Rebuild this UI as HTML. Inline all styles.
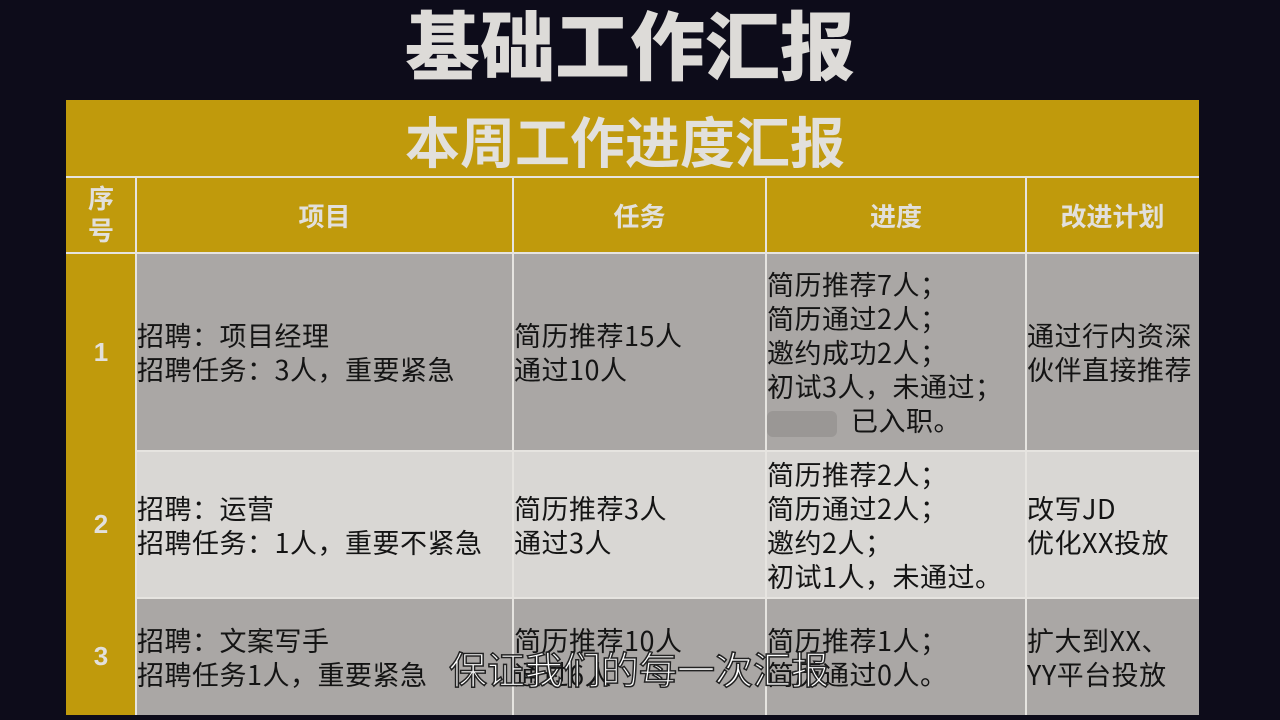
<!DOCTYPE html>
<html><head><meta charset="utf-8"><style>
body{margin:0;width:1280px;height:720px;background:#0d0c1a;overflow:hidden;position:relative;font-family:"Liberation Sans","Noto Sans CJK SC",sans-serif}
.a{position:absolute;box-sizing:border-box}
.t{position:absolute;left:405px;width:460px;top:2px;text-align:left;color:#dddbd8;font-size:75px;font-weight:900;line-height:92px;white-space:nowrap}
.gold{background:#c09a0c}
.g{background:#aaa7a5}
.l{background:#d9d7d4}
.h{color:#e2e0dc;font-weight:bold;font-size:26px;display:flex;align-items:center;justify-content:center;text-align:center}
.c{color:#141414;font-size:27px;letter-spacing:0.5px;line-height:34px;display:flex;flex-direction:column;justify-content:center;padding-left:1px;white-space:nowrap;font-family:"Noto Sans CJK SC",sans-serif}
.vl{position:absolute;width:2px;background:#e6e4e0}
.hl{position:absolute;height:2px;background:#e6e4e0}
.sub{position:absolute;left:449px;top:644px;font-size:38px;color:#fff;-webkit-text-stroke:1.5px #222;line-height:48px;font-family:"Noto Sans CJK SC",sans-serif}
</style></head><body>
<div class="t">基础工作汇报</div>
<div class="a gold" style="left:66px;top:100px;width:1133px;height:615px"></div>
<div class="a h" style="left:405px;top:100px;width:460px;height:77px;font-size:55px;justify-content:flex-start;white-space:nowrap">本周工作进度汇报</div>
<div class="a h" style="left:66px;top:177px;width:70px;height:76px;line-height:32px">序<br>号</div>
<div class="a h" style="left:136px;top:177px;width:377px;height:76px">项目</div>
<div class="a h" style="left:513px;top:177px;width:253px;height:76px">任务</div>
<div class="a h" style="left:766px;top:177px;width:260px;height:76px">进度</div>
<div class="a h" style="left:1026px;top:177px;width:173px;height:76px">改进计划</div>
<div class="a g" style="left:136px;top:253px;width:1063px;height:198px"></div>
<div class="a l" style="left:136px;top:451px;width:1063px;height:147px"></div>
<div class="a g" style="left:136px;top:598px;width:1063px;height:117px"></div>
<div class="a h" style="left:66px;top:253px;width:70px;height:198px">1</div>
<div class="a h" style="left:66px;top:451px;width:70px;height:147px">2</div>
<div class="a h" style="left:66px;top:598px;width:70px;height:117px">3</div>
<div class="a c" style="left:136px;top:253px;width:377px;height:198px">招聘：项目经理<br>招聘任务：3人，重要紧急</div>
<div class="a c" style="left:513px;top:253px;width:253px;height:198px">简历推荐15人<br>通过10人</div>
<div class="a c" style="left:766px;top:253px;width:260px;height:198px">简历推荐7人；<br>简历通过2人；<br>邀约成功2人；<br>初试3人，未通过；<br><span><span style="display:inline-block;width:70px;height:26px;background:#8f8c8a;vertical-align:middle;margin-right:14px;border-radius:6px;opacity:.6"></span>已入职。</span></div>
<div class="a c" style="left:1026px;top:253px;width:173px;height:198px">通过行内资深<br>伙伴直接推荐</div>
<div class="a c" style="left:136px;top:451px;width:377px;height:147px">招聘：运营<br>招聘任务：1人，重要不紧急</div>
<div class="a c" style="left:513px;top:451px;width:253px;height:147px">简历推荐3人<br>通过3人</div>
<div class="a c" style="left:766px;top:451px;width:260px;height:147px">简历推荐2人；<br>简历通过2人；<br>邀约2人；<br>初试1人，未通过。</div>
<div class="a c" style="left:1026px;top:451px;width:173px;height:147px">改写JD<br>优化XX投放</div>
<div class="a c" style="left:136px;top:598px;width:377px;height:117px">招聘：文案写手<br>招聘任务1人，重要紧急</div>
<div class="a c" style="left:513px;top:598px;width:253px;height:117px">简历推荐10人<br>通过6人</div>
<div class="a c" style="left:766px;top:598px;width:260px;height:117px">简历推荐1人；<br>简历通过0人。</div>
<div class="a c" style="left:1026px;top:598px;width:173px;height:117px">扩大到XX、<br>YY平台投放</div>
<div class="hl" style="left:66px;top:176px;width:1133px"></div>
<div class="hl" style="left:66px;top:252px;width:1133px"></div>
<div class="hl" style="left:136px;top:450px;width:1063px"></div>
<div class="hl" style="left:136px;top:597px;width:1063px"></div>
<div class="vl" style="left:135px;top:177px;height:538px"></div>
<div class="vl" style="left:512px;top:177px;height:538px"></div>
<div class="vl" style="left:765px;top:177px;height:538px"></div>
<div class="vl" style="left:1025px;top:177px;height:538px"></div>
<div class="sub">保证我们的每一次汇报</div>
</body></html>
